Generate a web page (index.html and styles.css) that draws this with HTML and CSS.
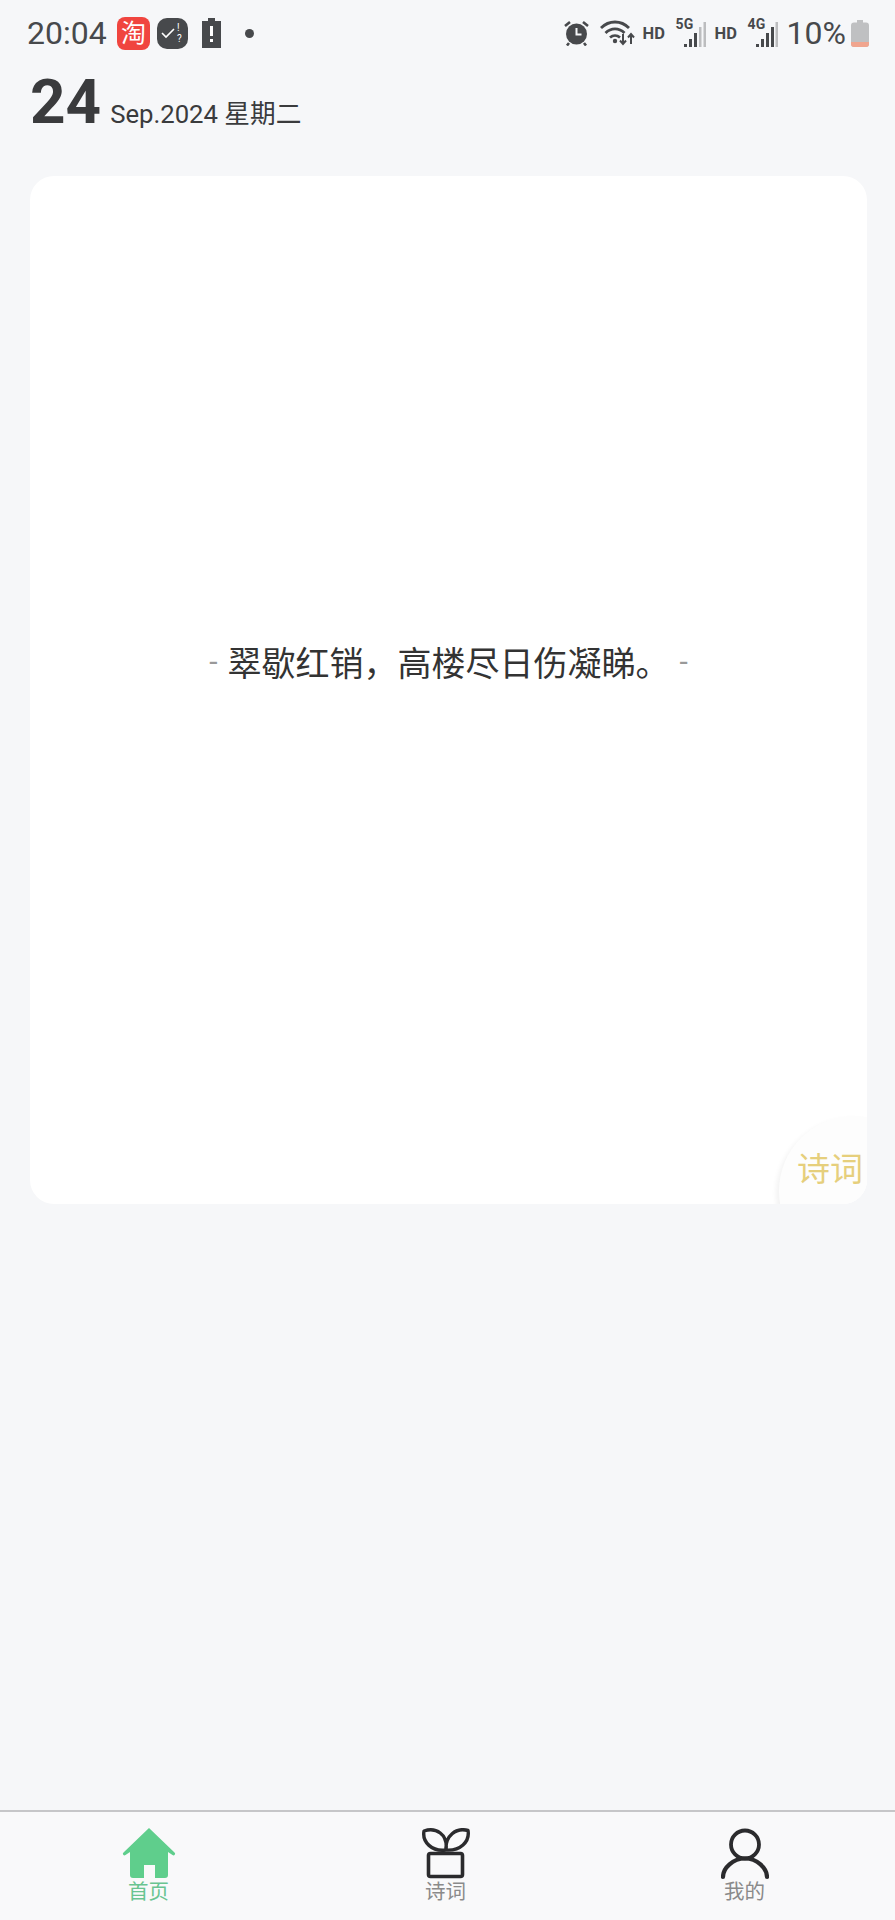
FILE: index.html
```html
<!DOCTYPE html>
<html lang="zh-CN">
<head>
<meta charset="UTF-8">
<meta name="viewport" content="width=device-width, initial-scale=1.0">
<title>诗词</title>
<link rel="stylesheet" href="styles.css">
</head>
<body>
  <div class="page">
    <!-- status bar -->
    <div class="status">
      <div class="status-left">
        <span class="time">20:04</span>
        <span class="tao">淘</span>
        <span class="check">
          <svg width="16" height="12" viewBox="0 0 16 12"><path d="M2 6l4 4 8-8" fill="none" stroke="#fff" stroke-width="1.600"/></svg>
          <span class="check-marks">!<br>?</span>
        </span>
        <svg class="batt-alert" width="19" height="30" viewBox="0 0 19 30">
          <path d="M6 0h7v3h6v27H0V3h6z" fill="#47494c"/>
          <rect x="8" y="8" width="3" height="10" fill="#fff"/>
          <rect x="8" y="21" width="3" height="3" fill="#fff"/>
        </svg>
        <span class="dot"></span>
      </div>
      <div class="status-right">
        <svg class="alarm" width="25" height="26" viewBox="0 0 25 26">
          <circle cx="12.500" cy="14" r="10.500" fill="#47494c"/>
          <path d="M1 6l5-4M24 6l-5-4M5 23l-2 2.500M20 23l2 2.500" stroke="#47494c" stroke-width="2.600" fill="none"/>
          <path d="M12.500 8v6.500h5" stroke="#f6f7f9" stroke-width="2" fill="none"/>
        </svg>
        <svg class="wifi" width="35" height="26" viewBox="0 0 35 26">
          <path d="M1 8C9 0 21 0 29 8M5.500 13C11 7.500 19 7.500 24.500 13M10 17.500c3-2.500 7-2.500 10 0" fill="none" stroke="#47494c" stroke-width="2.800"/>
          <circle cx="15" cy="21" r="2.200" fill="#47494c"/>
          <path d="M23 14v10M20 20.500l3 3.500 3-3.500M31 24V14M28 17.500l3-3.500 3 3.500" fill="none" stroke="#47494c" stroke-width="2"/>
        </svg>
        <span class="hd">HD</span>
        <span class="signal">
          <span class="net">5G</span>
          <svg width="22" height="26" viewBox="0 0 22 26">
            <rect x="0" y="22" width="3" height="3" fill="#47494c"/>
            <rect x="5" y="17" width="3" height="8" fill="#47494c"/>
            <rect x="10" y="11" width="3" height="14" fill="#47494c"/>
            <rect x="15" y="5" width="2.500" height="20" fill="#bcbdbf"/>
            <rect x="19.500" y="0" width="2.500" height="25" fill="#bcbdbf"/>
          </svg>
        </span>
        <span class="hd">HD</span>
        <span class="signal">
          <span class="net">4G</span>
          <svg width="22" height="26" viewBox="0 0 22 26">
            <rect x="0" y="22" width="3" height="3" fill="#47494c"/>
            <rect x="5" y="17" width="3" height="8" fill="#47494c"/>
            <rect x="10" y="11" width="3" height="14" fill="#47494c"/>
            <rect x="15" y="5" width="3" height="20" fill="#47494c"/>
            <rect x="19.500" y="0" width="2.500" height="25" fill="#bcbdbf"/>
          </svg>
        </span>
        <span class="percent">10%</span>
        <svg class="battery" width="18" height="27" viewBox="0 0 18 27">
          <path d="M6 0h6v2.500h3a3 3 0 0 1 3 3V24a3 3 0 0 1-3 3H3a3 3 0 0 1-3-3V5.500a3 3 0 0 1 3-3h3z" fill="#bfc0c2"/>
          <path d="M0 22h18v2a3 3 0 0 1-3 3H3a3 3 0 0 1-3-3z" fill="#f0a58f"/>
        </svg>
      </div>
    </div>

    <!-- date -->
    <div class="date">
      <span class="day">24</span>
      <span class="month">Sep.2024 星期二</span>
    </div>

    <!-- poem card -->
    <div class="card">
      <div class="quote">
        <span class="dash">-</span>
        <span class="line">翠歇红销，高楼尽日伤凝睇。</span>
        <span class="dash">-</span>
      </div>
      <div class="corner"></div>
      <div class="tag">诗词</div>
    </div>

    <!-- bottom tabs -->
    <div class="tabs">
      <div class="tab active">
        <svg width="54" height="52" viewBox="0 0 54 52">
          <path d="M27 0 52.500 24.500a1.500 1.500 0 0 1-2 2.500L46 24V47a3 3 0 0 1-3 3H33V37H22v13H11a3 3 0 0 1-3-3V24L3.500 27a1.500 1.500 0 0 1-2-2.500z" fill="#5fce8c"/>
        </svg>
        <span class="tab-label">首页</span>
      </div>
      <div class="tab">
        <svg width="48" height="52" viewBox="0 0 48 52">
          <path d="M2 3C14 -1 26 6 24 22 10 24 0 14 2 3zM46 2.500C34 -1 23 8 24 22 38 23 48 14 46 2.500z" fill="none" stroke="#2b2b2d" stroke-width="3.400" stroke-linejoin="round"/>
          <rect x="6.500" y="25.500" width="34" height="23" rx="2" fill="none" stroke="#2b2b2d" stroke-width="3.600"/>
        </svg>
        <span class="tab-label">诗词</span>
      </div>
      <div class="tab tab-user">
        <svg width="48" height="52" viewBox="0 0 48 52">
          <circle cx="24" cy="16.500" r="14" fill="none" stroke="#2b2b2d" stroke-width="3.800"/>
          <path d="M2 49C2 40 12 30.500 24 30.500S46 40 46 49" fill="none" stroke="#2b2b2d" stroke-width="4.200" stroke-linecap="round"/>
        </svg>
        <span class="tab-label">我的</span>
      </div>
    </div>
  </div>
</body>
</html>
```

FILE: styles.css
```css
* {
  box-sizing: border-box;
}

body {
  margin: 0;
  background-color: #f6f7f9;
  color: #333;
  font-family: Roboto, "Noto Sans CJK SC", sans-serif;
}

.page {
  display: flex;
  flex-direction: column;
  height: 1920px;
}

/* status bar */
.status {
  display: flex;
  justify-content: space-between;
  align-items: center;
  height: 66px;
  padding: 0 26px 0 27px;
  color: #47494c;
}

.status-left,
.status-right {
  display: flex;
  align-items: center;
}

.time {
  font-size: 32px;
  width: 90px;
}

.tao {
  width: 33px;
  height: 33px;
  border-radius: 8px;
  background-color: #f0453f;
  color: #fff;
  font-size: 25px;
  line-height: 33px;
  text-align: center;
}

.check {
  display: flex;
  align-items: center;
  gap: 1px;
  width: 31px;
  height: 31px;
  margin-left: 7px;
  padding-left: 3px;
  border-radius: 10px;
  background-color: #47494c;
}

.check-marks {
  color: #fff;
  font-size: 10px;
  line-height: 11px;
}

.batt-alert {
  margin-left: 14px;
}

.dot {
  width: 9px;
  height: 9px;
  margin-left: 24px;
  border-radius: 50%;
  background-color: #47494c;
}

.alarm {
  margin-right: 11px;
  margin-left: 1px;
}

.wifi {
  margin-right: 8px;
}

.hd {
  font-size: 16.500px;
  font-weight: 700;
  width: 22px;
}

.signal {
  display: flex;
  align-items: flex-end;
  position: relative;
  width: 30px;
  height: 30px;
  margin: 0 9px 0 11px;
  justify-content: flex-end;
}

.net {
  position: absolute;
  left: 0;
  top: -1px;
  font-size: 14px;
  font-weight: 700;
  line-height: 14px;
}

.percent {
  font-size: 32px;
  margin-right: 5px;
}

/* date row */
.date {
  display: flex;
  align-items: baseline;
  height: 69px;
  padding-top: 6px;
  padding-left: 30px;
  color: #3a3b3d;
}

.day {
  font-size: 62px;
  font-weight: 700;
  line-height: 60px;
}

.month {
  margin-left: 9px;
  font-size: 25.700px;
}

/* card */
.card {
  position: relative;
  display: flex;
  align-items: center;
  justify-content: center;
  height: 1028px;
  margin: 41px 28px 0 30px;
  padding-bottom: 58px;
  overflow: hidden;
  border-radius: 24px;
  background-color: #fff;
}

.quote {
  display: flex;
  align-items: center;
  gap: 10px;
  font-size: 34px;
  color: #333;
}

.dash {
  color: #999;
  font-size: 30px;
}

.corner {
  position: absolute;
  right: -62px;
  bottom: -62px;
  width: 150px;
  height: 150px;
  border-radius: 50%;
  background-color: #fdfdfd;
  box-shadow: -3px 3px 5px rgba(0, 0, 0, 0.05);
}

.tag {
  position: absolute;
  right: 4px;
  bottom: 13px;
  font-size: 33px;
  color: #e6cf7c;
}

/* tabs */
.tabs {
  display: flex;
  margin-top: auto;
  height: 110px;
  padding-right: 2px;
  border-top: 2px solid #c6c6c8;
  background-color: #f9f9fa;
}

.tab {
  flex: 1;
  display: flex;
  flex-direction: column;
  align-items: center;
  padding-top: 16px;
}

.tab-user {
  padding-left: 2px;
}

.tab-label {
  font-size: 20.500px;
  line-height: 24px;
  color: #8a8a8a;
}

.tab.active .tab-label {
  color: #69c491;
}
```
